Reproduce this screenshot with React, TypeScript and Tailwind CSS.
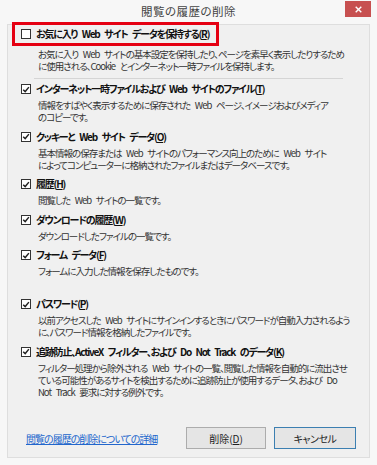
const font = "[font-family:'Noto_Sans_CJK_JP','Noto_Sans',sans-serif] [font-feature-settings:'palt']";

type Item = { label: string; key: string; desc: string[]; checked: boolean; extra?: string };

const items: Item[] = [
  { label: "インターネット一時ファイルおよび Web サイトのファイル", key: "T", checked: true, desc: ["情報をすばやく表示するために保存された Web ページ、イメージおよびメディア", "のコピーです。"] },
  { label: "クッキーと Web サイト データ", key: "O", checked: true, desc: ["基本情報の保存または Web サイトのパフォーマンス向上のために Web サイト", "によってコンピューターに格納されたファイルまたはデータベースです。"] },
  { label: "履歴", key: "H", checked: true, desc: ["閲覧した Web サイトの一覧です。"] },
  { label: "ダウンロードの履歴", key: "W", checked: true, desc: ["ダウンロードしたファイルの一覧です。"] },
  { label: "フォーム データ", key: "F", checked: true, desc: ["フォームに入力した情報を保存したものです。"] },
  { label: "パスワード", key: "P", checked: true, extra: "mt-[20px]", desc: ["以前アクセスした Web サイトにサインインするときにパスワードが自動入力されるよう", "に、パスワード情報を格納したファイルです。"] },
  { label: "追跡防止、ActiveX フィルター、および Do Not Track のデータ", key: "K", checked: true, desc: ["フィルター処理から除外される Web サイトの一覧、閲覧した情報を自動的に流出させ", "ている可能性があるサイトを検出するために追跡防止が使用するデータ、および Do", "Not Track 要求に対する例外です。"] },
];

const CheckBox = ({ checked }: { checked: boolean }) => (
  <span className="flex h-[10px] w-[10px] shrink-0 items-center justify-center border border-[#333] bg-white">
    {checked && (
      <svg viewBox="0 0 10 10" className="h-[9px] w-[9px]">
        <path d="M1.5 5.2 L4 7.6 L8.6 2" fill="none" stroke="#222" strokeWidth="1.8" />
      </svg>
    )}
  </span>
);

const Label = ({ label, k, checked }: { label: string; k: string; checked: boolean }) => (
  <div className="flex h-[14px] items-center gap-[5px] pl-[13px]">
    <CheckBox checked={checked} />
    <span className="whitespace-nowrap text-[10px] font-bold leading-[14px] tracking-[-1.2px] [word-spacing:3.5px] text-[#111]">
      {label}(<span className="underline">{k}</span>)
    </span>
  </div>
);

const Desc = ({ lines }: { lines: string[] }) => (
  <div className="mt-[3px] pl-[30px] text-[9.5px] leading-[12px] tracking-[-1px] [word-spacing:3.5px] text-[#333]">
    {lines.map((l) => (
      <div key={l} className="whitespace-nowrap">{l}</div>
    ))}
  </div>
);

export default function App() {
  return (
    <div className={`relative flex h-[465px] w-[377px] flex-col overflow-hidden bg-[#f7f7f7] ${font}`}>
      <div className="flex h-[24px] items-center justify-center text-[11.5px] tracking-[0.5px] text-[#444]">閲覧の履歴の削除</div>
      <div className="absolute right-[6px] top-[1px] flex h-[16px] w-[26px] items-center justify-center bg-[#c75050]">
        <svg viewBox="0 0 10 10" className="h-[7px] w-[7px]">
          <path d="M1 1 L9 9 M9 1 L1 9" stroke="#fff" strokeWidth="2" />
        </svg>
      </div>

      <div className="mx-[7px] mb-[7px] flex flex-1 flex-col border border-[#dedede] bg-[#f0f0f0] pt-[2px]">
        <Label label="お気に入り Web サイト データを保持する" k="R" checked={false} />
        <div className="mt-[4px]">
          <Desc lines={["お気に入り Web サイトの基本設定を保持したり、ページを素早く表示したりするため", "に使用される、Cookie とインターネット一時ファイルを保持します。"]} />
        </div>
        <div className="mx-[26px] mt-[6px] h-px bg-[#d5d5d5]" />

        {items.map((it, i) => (
          <div key={it.key} className={it.extra ?? (i === 0 ? "mt-[3px]" : "mt-[6.5px]")}>
            <Label label={it.label} k={it.key} checked={it.checked} />
            <Desc lines={it.desc} />
          </div>
        ))}

        <div className="mt-auto mb-[8px] flex items-center pl-[18px] pr-[13px]">
          <a className="whitespace-nowrap text-[10px] tracking-[-1px] text-[#2266cc] underline">閲覧の履歴の削除についての詳細</a>
          <button className="ml-auto h-[22px] w-[80px] border border-[#acacac] bg-[#e5e5e5] text-[10px] text-[#222]">
            削除(<span className="underline">D</span>)
          </button>
          <button className="ml-[8px] h-[22px] w-[82px] border border-[#3c7fb1] bg-[#e5e5e5] text-[10px] tracking-[-0.5px] text-[#222]">キャンセル</button>
        </div>
      </div>

      <div className="absolute left-[12px] top-[22px] h-[24px] w-[207px] border-[3px] border-[#e50012]" />
    </div>
  );
}
